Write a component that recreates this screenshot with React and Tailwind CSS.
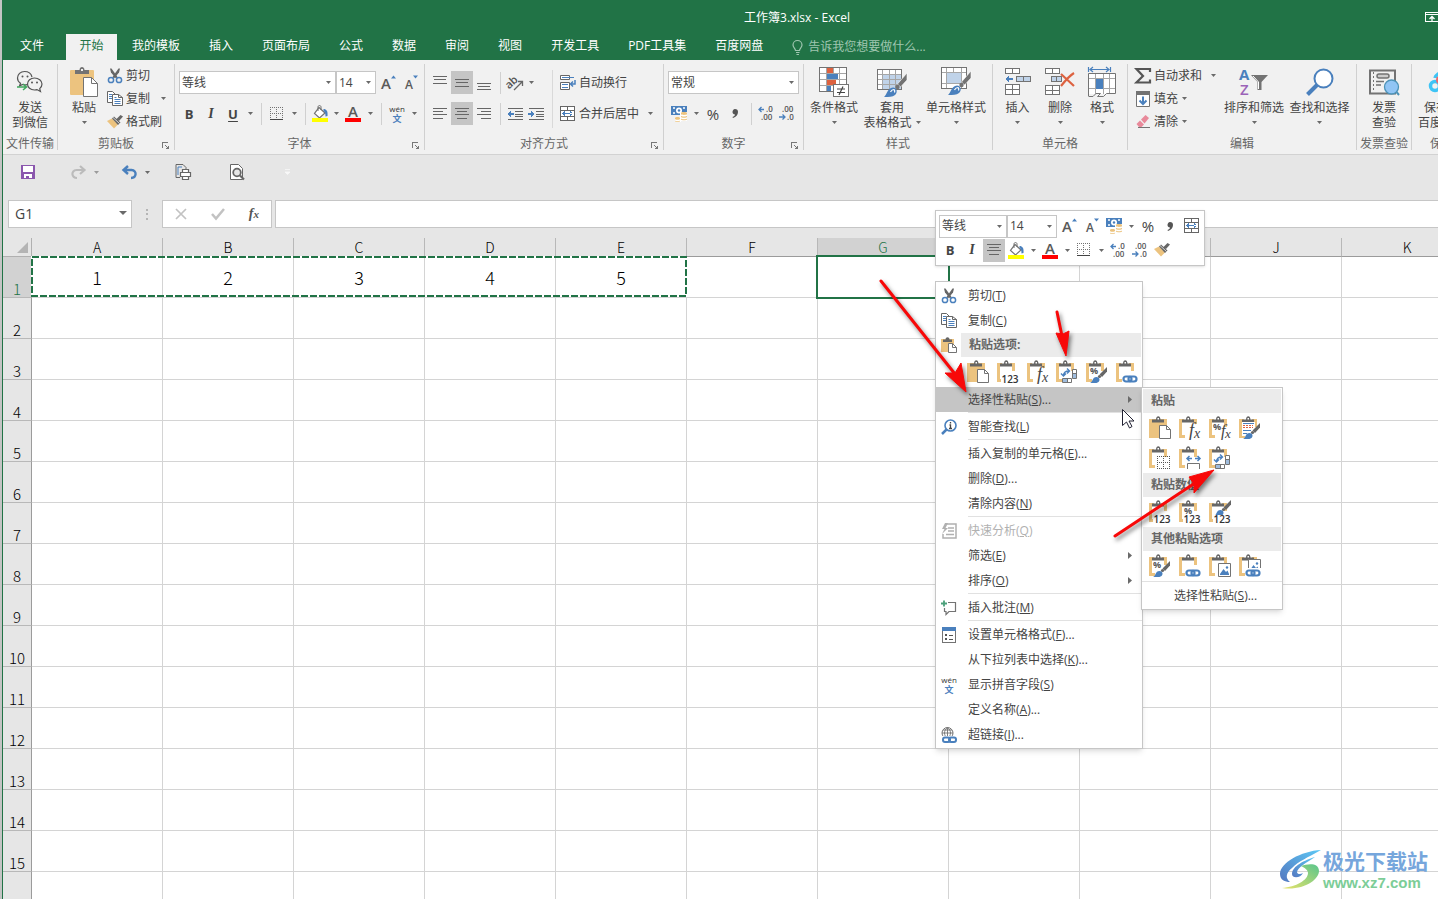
import React, { useState } from 'react';
import clsx from 'clsx';

const GRAY = '#737373';
const BLUE = '#4a80bd';
const TAN = '#ecc37f';

/* ---------- icons ---------- */

function Svg({ w = 16, h = 16, crisp, className, children }) {
  return (
    <svg
      width={w}
      height={h}
      viewBox={`0 0 ${w} ${h}`}
      fill="none"
      shapeRendering={crisp ? 'crispEdges' : undefined}
      className={clsx('shrink-0 overflow-visible', className)}
      aria-hidden="true"
    >
      {children}
    </svg>
  );
}

const Caret = ({ big }) => (
  <Svg w={big ? 8 : 5} h={big ? 4 : 3}>
    <path d={big ? 'M0 0h8L4 4z' : 'M0 0h5L2.5 3z'} fill="#6a6a6a" />
  </Svg>
);

function Scissors() {
  return (
    <Svg>
      <path d="M3 .5l1 4 5 6L10.500 9 4.500.5z" fill="#666" />
      <path d="M13 .5l-1 4-5 6L5.500 9l6-8.500z" fill="#666" />
      <circle cx="4" cy="12" r="2.600" stroke={BLUE} strokeWidth="1.500" />
      <circle cx="12" cy="12" r="2.600" stroke={BLUE} strokeWidth="1.500" />
    </Svg>
  );
}

function Copy() {
  return (
    <Svg>
      <path d="M.5 .5h5l3 3v8h-8z" fill="#fff" stroke="#666" />
      <path d="M2 3.500h3M2 5.500h3M2 7.500h3" stroke={BLUE} />
      <path d="M5.500 3.500h6l4 3v8h-10z" fill="#fff" stroke="#666" />
      <path d="M11.500 3.500v3h4" stroke="#666" />
      <path d="M7.500 6.500h2M7.500 8.500h6M7.500 10.500h6M7.500 12.500h6" stroke={BLUE} />
    </Svg>
  );
}

function FormatPainter() {
  return (
    <Svg>
      <path d="M0 7l5-2.500 6 6L7 14.500z" fill={TAN} />
      <path d="M5 4.500l2-2 6.500 6-2.500 2.500z" fill="#666" />
      <path d="M9 5.500L13.500 1l2.500 1.500L12 7z" fill="#666" />
      <path d="M6 3.500l6.500 6" stroke="#f1f1f1" strokeWidth="0.800" />
    </Svg>
  );
}

function WeChat() {
  return (
    <Svg w={28} h={24}>
      <path d="M16 7c-1-4-4.500-5.500-7.500-5.500C4.500 1.500 1.500 4.500 1.500 8c0 2 1 4 3 5.200L3.500 16l3-1.500c1.500.5 3 .5 4.500.2" stroke="#555" strokeWidth="1.200" />
      <path d="M18.500 8c-4 0-7 2.500-7 6s3 6 7 6c1 0 1.800-.1 2.500-.4l3.500 2-.8-3c1.500-1.200 2.300-2.800 2.300-4.600 0-3.500-3.500-6-7.500-6z" fill="#f1f1f1" stroke="#555" strokeWidth="1.200" />
      <circle cx="6.500" cy="6.500" r="1" fill="#555" />
      <circle cx="11.500" cy="6.500" r="1" fill="#555" />
      <circle cx="16" cy="12.500" r="1" fill="#555" />
      <circle cx="21" cy="12.500" r="1" fill="#555" />
      <path d="M1 17h9M7 14l3.500 3L7 20" stroke="#41a85f" strokeWidth="1.500" />
    </Svg>
  );
}

function PasteLarge() {
  return (
    <Svg w={28} h={30}>
      <rect x="0" y="3" width="24" height="25" rx="1" fill={TAN} />
      <path d="M5 3h4.500c0-4 5-4 5 0H19v4H5z" fill="#737373" />
      <rect x="11" y="2" width="2" height="2" fill="#f1f1f1" />
      <path d="M13.500 10.500h8l6 6v13h-14z" fill="#fff" stroke={GRAY} />
      <path d="M21.500 10.500v6h6" stroke={GRAY} />
    </Svg>
  );
}

function FontSize({ up }) {
  return (
    <Svg>
      <text x={up ? 1 : 2} y="14" fontSize={up ? 15 : 12} fontWeight="600" fill="#5a5a5a">A</text>
      <path d={up ? 'M11 3.500h5L13.500.5z' : 'M10 .5h5l-2.500 3z'} fill={BLUE} />
    </Svg>
  );
}

const Borders = () => (
  <Svg w={14} h={14} crisp>
    <path d="M0 .5h13M0 6.500h13M.5 0v12M6.500 0v12M12.500 0v12" stroke={GRAY} strokeDasharray="1 1" />
    <path d="M0 12.500h13" stroke="#444" />
  </Svg>
);

function FillColor() {
  return (
    <Svg w={16} h={17}>
      <path d="M7 2.500l6 5.500-5.500 5L2.500 8.500z" fill="#fff" stroke={GRAY} strokeWidth="1.200" />
      <path d="M6 6V2c0-2 3-2 3 0v3" stroke={GRAY} />
      <path d="M11.500 4c3 0 4.500 2 4 7l-2 .5c0-3-.5-4.500-2-5.500z" fill={BLUE} />
      <rect x="0" y="13" width="16" height="4" fill="#ffff00" />
    </Svg>
  );
}

function FontColor() {
  return (
    <Svg w={16} h={17}>
      <text x="3" y="12" fontSize="15" fontWeight="600" fill="#5a5a5a">A</text>
      <rect x="0" y="13" width="16" height="4" fill="#ff0000" />
    </Svg>
  );
}

function Pinyin() {
  return (
    <Svg w={16} h={18}>
      <text x="8" y="7" fontSize="8" textAnchor="middle" fill="#333">wén</text>
      <text x="8" y="17" fontSize="9" fontWeight="700" textAnchor="middle" fill={BLUE}>文</text>
    </Svg>
  );
}

const LINES = {
  top: 'M0 1.500h14M1 4.500h12M0 8.500h14',
  middle: 'M0 4.500h14M1 7.500h12M0 11.500h14',
  bottom: 'M0 8.500h14M1 11.500h12M0 14.500h14',
  left: 'M0 2.500h14M0 5.500h10M0 8.500h14M0 12.500h10',
  center: 'M0 2.500h14M2 5.500h10M0 8.500h14M2 12.500h10',
  right: 'M0 2.500h14M4 5.500h10M0 8.500h14M4 12.500h10',
};

const Align = ({ kind }) => (
  <Svg w={14} h={16} crisp>
    <path d={LINES[kind]} stroke="#666" />
  </Svg>
);

const Orientation = () => (
  <Svg>
    <text x="-1" y="11" fontSize="11" fontWeight="600" fill="#555" transform="rotate(-42 5 9)">ab</text>
    <path d="M7 15l8-8M11 6.500h4.500V11" stroke="#666" strokeWidth="1.300" />
  </Svg>
);

const Indent = ({ out }) => (
  <Svg h={14} crisp>
    <path d="M1 1.500h15M8 4.500h8M8 7.500h8M8 9.500h8M1 12.500h15" stroke="#666" />
    <path d={out ? 'M0 7l4-3v2h3v2H4v2z' : 'M7 7L3 4v2H0v2h3v2z'} fill={BLUE} />
  </Svg>
);

const WrapText = () => (
  <Svg>
    <path d="M.5 .5h9v4h-9zM.5 7.500h9v7h-9z" fill="#fff" stroke="#666" />
    <path d="M2 2.500h12M2 9.500h6M2 12.500h6" stroke={BLUE} />
    <path d="M15 5v4h-4M13 6.500L10.500 9l2.500 2.500" stroke={BLUE} strokeWidth="1.500" />
  </Svg>
);

const Merge = () => (
  <Svg crisp>
    <path d="M.5 .5h14v14H.5zM.5 4.500h14M.5 10.500h14M7.500 .5v4M7.500 10.500v4" fill="#fff" stroke="#666" />
    <path d="M2 7h11v1H2zM5 5v5L2 7.500zM10 5v5l3-2.500z" fill={BLUE} />
  </Svg>
);

function Money() {
  return (
    <Svg>
      <rect width="16" height="9" fill={BLUE} />
      <path d="M2 2h2M12 2h2M2 7h2" stroke="#fff" strokeWidth="1.500" />
      <circle cx="8" cy="4.500" r="3" fill="#fff" />
      <circle cx="8" cy="4.500" r="1.200" fill={BLUE} />
      <path d="M9 6h7v9h-6v1H4v-5h5z" fill="#fff" />
      <path d="M10 7c0-1.300 6-1.300 6 0v1c0 1.200-6 1.200-6 0zM10 9.700c0 1 6 1 6 0v1.200c0 1-6 1-6 0zM10 12.500c0 1 6 1 6 0v1c0 1-6 1-6 0zM4 12c0-1.200 5-1.200 5 0v1c0 1-5 1-5 0zM4 14.500c0 1 5 1 5 0v.8c0 1-5 1-5 0z" fill={TAN} />
    </Svg>
  );
}

function Decimal({ more }) {
  return (
    <Svg w={16} h={15}>
      <text x={more ? 8 : 3} y="6" fontSize="8" fontWeight="600" fill="#555">{more ? '.0' : '.00'}</text>
      <text x={more ? 3 : 8} y="14" fontSize="8" fontWeight="600" fill="#555">{more ? '.00' : '.0'}</text>
      <path d={more ? 'M6 3.500H1M3.500 1L1 3.500 3.500 6' : 'M0 11h6M3.500 8.500L6 11l-2.500 2.500'} stroke={BLUE} strokeWidth="1.300" />
    </Svg>
  );
}

const Brush = () => (
  <g>
    <path d="M30 6v7l-6.500 7-3-3z" fill={GRAY} stroke="#fff" strokeWidth="0.600" />
    <circle cx="20.500" cy="20" r="2.200" fill={GRAY} />
    <path d="M7 30c3-2 3-9 9-9.500 4 0 5 5 2 7.500-2.500 2-6 2-11 2z" fill={BLUE} />
    <path d="M13.500 25c1-2 2-2.500 3.500-2.500 1 1 1 2 .5 3" stroke="#fff" strokeWidth="1.200" />
  </g>
);

const CondFormat = () => (
  <Svg w={30} h={30}>
    <g shapeRendering="crispEdges">
      <path d="M.5 .5h27v24H.5z" fill="#fff" />
      <path d="M7.500 0v25M14.500 0v25M20.500 0v25M0 6.500h28M0 12.500h28M0 18.500h28" stroke="#a6a6a6" />
      <path d="M.5 .5h27v24H.5z" stroke={GRAY} />
      <path d="M8 1h6v5H8zM8 13h9v5H8z" fill="#dd6240" />
      <path d="M8 7h11v5H8zM8 19h4v5H8z" fill={BLUE} />
      <path d="M14.500 17.500h15v12h-15z" fill="#fff" stroke={GRAY} />
    </g>
    <path d="M18 22h8M18 25.500h8M24 19.500l-4 8.500" stroke="#444" strokeWidth="1.200" />
  </Svg>
);

const TableFormat = () => (
  <Svg w={30} h={30}>
    <g shapeRendering="crispEdges">
      <path d="M.5 2.500h24v20H.5z" fill="#fff" />
      <path d="M6 8h18v14H6z" fill="#c0d3e9" />
      <path d="M5.500 2v21M12.500 2v21M18.500 2v21M0 7.500h25M0 12.500h25M0 17.500h25" stroke="#a6a6a6" />
      <path d="M.5 2.500h24v20H.5z" stroke={GRAY} />
    </g>
    <Brush />
  </Svg>
);

const CellStyles = () => (
  <Svg w={30} h={30}>
    <g shapeRendering="crispEdges">
      <path d="M.5 .5h25v21H.5z" fill="#fff" />
      <path d="M5.500 0v22M20.500 0v22M0 5.500h26M0 16.500h26M12.500 0v5" stroke="#a6a6a6" />
      <path d="M6 6h14v10H6z" fill="#c0d3e9" />
      <path d="M.5 .5h25v21H.5z" stroke={GRAY} />
    </g>
    <g transform="translate(0 -2)"><Brush /></g>
  </Svg>
);

const InsertCells = () => (
  <Svg w={28} h={28} crisp>
    <path d="M1.500 .5h14v5h-14zM8.500 .5v5M1.500 16.500h14v10h-14zM8.500 16.500v10M1.500 21.500h14" fill="#fff" stroke={GRAY} />
    <path d="M12.500 8.500h14v5h-14zM19.500 8.500v5" fill="#c0d3e9" stroke={GRAY} />
    <path d="M1 11l4-3.500V10h4v2H5v2.500z" fill={BLUE} />
  </Svg>
);

const DeleteCells = () => (
  <Svg w={30} h={28}>
    <g shapeRendering="crispEdges">
      <path d="M.5 .5h14v5H.5zM7.500 .5v5M.5 17.500h14v9H.5zM7.500 17.500v9M.5 22.500h14" fill="#fff" stroke={GRAY} />
      <path d="M6.500 8.500h10v5h-10zM11.500 8.500v5" fill="#c0d3e9" stroke={GRAY} />
    </g>
    <path d="M16 6l13 12M29 5c-5 3-9 8-13 13" stroke="#dd6240" strokeWidth="2.200" />
  </Svg>
);

const FormatCells = () => (
  <Svg w={28} h={32}>
    <path d="M.5 1v5M22.500 1v5M2 3.500h19M5 1L2 3.500 5 6M18 1l3 2.500L18 6" stroke={BLUE} strokeWidth="1.200" />
    <g shapeRendering="crispEdges">
      <path d="M.5 7.500h27v20H.5z" fill="#fff" />
      <path d="M7.500 7v21M15.500 7v21M21.500 7v21M0 12.500h28M0 22.500h28" stroke="#a6a6a6" />
      <path d="M8 13h7v10H8z" fill={BLUE} />
    </g>
    <path d="M.5 30V7.500h27v20h-9l-3 3h-6l3-3H8l-3 3H.5" stroke={GRAY} />
  </Svg>
);

const Sigma = () => (
  <Svg>
    <path d="M15 4V1H1.500L8 8l-6.500 6.500H15v-3" stroke="#555" strokeWidth="2.200" />
  </Svg>
);

const FillDown = () => (
  <Svg>
    <path d="M1.500 .5h13v15h-13z" fill="#fff" stroke={GRAY} />
    <path d="M1 0h14v4H1z" fill={GRAY} />
    <path d="M8 5.500v8M4.500 9.500L8 13l3.500-3.500" stroke={BLUE} strokeWidth="2" />
  </Svg>
);

const Eraser = () => (
  <Svg>
    <path d="M6 5.500L10.500 1 14 4l-4.500 5.500z" fill="#e8899a" />
    <path d="M5 6.500l4 4L6.500 13H4L1.500 10z" fill="#e8899a" />
    <path d="M3 13.500h12" stroke={GRAY} />
  </Svg>
);

const SortFilter = () => (
  <Svg w={30} h={30}>
    <text x="0" y="13" fontSize="15" fontWeight="700" fill={BLUE}>A</text>
    <text x="1" y="28" fontSize="15" fontWeight="600" fill="#9b63b8">Z</text>
    <path d="M12 8h17l-6.500 7v8h-4v-8z" fill={GRAY} />
    <path d="M14 9l5.500 6v7" stroke="#fff" />
  </Svg>
);

const FindBig = () => (
  <Svg w={28} h={28}>
    <path d="M1.500 26.500L11 17" stroke={BLUE} strokeWidth="4" />
    <circle cx="17.500" cy="10.500" r="9" fill="#fff" stroke={BLUE} strokeWidth="2" />
  </Svg>
);

const Invoice = () => (
  <Svg w={30} h={27}>
    <path d="M1 1.500h25v23H1z" fill="#f1f1f1" stroke={GRAY} strokeWidth="2" />
    <path d="M4.500 3v20" stroke={GRAY} strokeDasharray="2 2" />
    <rect x="8" y="5" width="12" height="4" rx="2" fill="#ccc" stroke={GRAY} strokeWidth="1.500" />
    <path d="M7 12.500h8M7 16h5" stroke={GRAY} strokeWidth="1.500" />
    <circle cx="22.500" cy="18" r="7" fill="#91c5f5" stroke="#4d93b8" strokeWidth="1.300" />
    <path d="M27.500 23l2.500 3" stroke="#4d93b8" strokeWidth="2" />
  </Svg>
);

const BaiduPan = () => (
  <Svg w={28} h={26}>
    <circle cx="7" cy="17" r="4.500" stroke="#3fc4f5" strokeWidth="3.500" />
    <circle cx="20" cy="17" r="4.500" stroke="#3f8ff5" strokeWidth="3.500" />
    <path d="M7 9c1-6 12-6 13 0" stroke="#3fc4f5" strokeWidth="3.500" />
    <circle cx="12" cy="11" r="4" fill="#f0686c" />
  </Svg>
);

const Launcher = () => (
  <Svg w={8} h={8} crisp>
    <path d="M.5 6V.5H6M3 3l3 3" stroke="#777" />
    <path d="M7 3v4H3z" fill="#777" />
  </Svg>
);

const Comma = () => (
  <Svg w={6} h={9}>
    <path d="M3 0c2 0 3 1 3 3 0 3-2 5-5 6l-.5-1C2 7.500 3 6.500 3 5.500 1.500 5.500.5 4.500.5 3S1.500 0 3 0z" fill="#555" />
  </Svg>
);

/* Small clipboard drawings used by the paste options */

const paste123 = (
  <g>
    <path d="M4 15h18v9H4z" fill="#fff" />
    <text x="13" y="23" fontSize="10" fontWeight="600" textAnchor="middle" fill="#333">123</text>
  </g>
);
const pastePct = <text x="4" y="14" fontSize="9" fontWeight="700" fill="#555">%</text>;
const pasteFx = (
  <g fill="#444" fontStyle="italic" fontFamily="Liberation Serif, serif">
    <path d="M11 8h10v15H9v-6z" fill="#fff" />
    <text x="10" y="20" fontSize="18">f</text>
    <text x="15" y="22" fontSize="14">x</text>
  </g>
);
const pasteLink = (
  <g>
    <path d="M6 14h16v9H6z" fill="#fff" />
    <rect x="7.500" y="16.500" width="8" height="5" rx="2.500" stroke={BLUE} strokeWidth="2.200" />
    <rect x="12.500" y="16.500" width="8" height="5" rx="2.500" stroke={BLUE} strokeWidth="2.200" />
  </g>
);
const pasteBrush = (
  <g>
    <path d="M21 7v4.500L16 17l-2.500-2.500z" fill="#666" />
    <circle cx="13.500" cy="16.500" r="1.600" fill="#666" />
    <path d="M4 23c3-1 2-6 6.500-6 3 0 4 3 2 5-2 1.500-5 1-8.500 1z" fill={BLUE} />
  </g>
);
const pastePicture = (
  <g>
    <path d="M9.500 9.500h12v13h-12z" fill="#fff" stroke={GRAY} />
    <path d="M11 20l3.500-5 2.500 3 1.500-1.500L20 20v1h-9z" fill={BLUE} />
    <circle cx="18" cy="13.500" r="1.200" fill={BLUE} />
  </g>
);

const PASTE_ART = {
  all: (
    <g>
      <path d="M10.500 9.500h7l4 4v9h-11z" fill="#fff" stroke={GRAY} />
      <path d="M17.500 9.500v4h4" stroke={GRAY} />
    </g>
  ),
  values: paste123,
  formulas: pasteFx,
  transpose: (
    <g>
      <path d="M16.500 9.500h4v9h-4zM6.500 18.500h9v4h-9z" fill="#fff" stroke={GRAY} />
      <path d="M17 14h3v4h-3zM7 19h4v3H7z" fill="#9fbcdd" />
      <path d="M16.500 13.500h4M11.500 18.500v4" stroke={GRAY} />
      <path d="M7.500 16c0-3 1.500-5 5.500-5M5 13.500L7.500 16l2.500-2.500M11 8.500l2.500 2.500-2.500 2.500" stroke={BLUE} strokeWidth="1.400" />
    </g>
  ),
  formatting: <g>{pastePct}{pasteBrush}</g>,
  link: pasteLink,
  formulaNumber: (
    <g>
      {pastePct}
      <g fill="#444" fontStyle="italic" fontFamily="Liberation Serif, serif">
        <text x="12" y="20" fontSize="16">f</text>
        <text x="16" y="22" fontSize="13">x</text>
      </g>
    </g>
  ),
  keepSource: (
    <g>
      <path d="M3 6h13v14H3z" fill="#fff" />
      <path d="M4 9.500h10M4 11.500h10" stroke="#dd6240" strokeDasharray="2 1" />
      <path d="M4 7.500h11M4 14.500h8M4 17.500h4" stroke={BLUE} />
      {pasteBrush}
    </g>
  ),
  noBorders: (
    <path d="M8 10.500h13M8 16.500h13M8 22.500h13M8.500 10v13M14.500 10v13M20.500 10v13" stroke="#555" strokeDasharray="1 1" shapeRendering="crispEdges" />
  ),
  colWidths: (
    <g>
      <path d="M8 12.500h5M16 12.500h5M10.500 10L8 12.500l2.500 2.500M18.500 10l2.500 2.500-2.500 2.500" stroke={BLUE} strokeWidth="1.500" />
      <path d="M8.500 23v-5.500h12V23" stroke={GRAY} />
    </g>
  ),
  valueNumber: (
    <g>
      {paste123}
      <text x="5" y="14" fontSize="9" fontWeight="700" fill="#555">%</text>
    </g>
  ),
  valueSource: (
    <g>
      <g transform="translate(1 -7)">{pasteBrush}</g>
      {paste123}
    </g>
  ),
  picture: pastePicture,
  linkedPicture: (
    <g>
      <g transform="translate(0 -4)">{pastePicture}</g>
      {pasteLink}
    </g>
  ),
};

function PasteIcon({ kind }) {
  return (
    <Svg w={22} h={24}>
      {kind === 'all' ? (
        <path d="M0 3h18v19H0z" fill={TAN} />
      ) : (
        <path d="M0 3h5v3H3v13h3v3H0zM13 3h5v8h-3V6h-2z" fill={TAN} />
      )}
      <path d="M3 3.500h4c0-4.500 4.500-4.500 4.500 0H15v3H3z" fill="#666" />
      <path d="M8.500 2h1.500v1.500H8.500z" fill="#fff" />
      {PASTE_ART[kind]}
    </Svg>
  );
}

const MENU_ICONS = {
  cut: <Scissors />,
  copy: <Copy />,
  paste: (
    <Svg>
      <path d="M0 2h13v13H0z" fill={TAN} />
      <path d="M2 2.500h2.500c0-3 4-3 4 0H11V5H2z" fill="#666" />
      <path d="M7.500 6.500h4l4 4v5h-8z" fill="#fff" stroke={GRAY} />
      <path d="M11.500 6.500v4h4" stroke={GRAY} />
    </Svg>
  ),
  search: (
    <Svg>
      <path d="M1 15l4.500-4.500" stroke={BLUE} strokeWidth="2.500" />
      <circle cx="9.500" cy="6.500" r="5.500" fill="#fff" stroke={BLUE} strokeWidth="1.600" />
      <path d="M9.500 3v1.500M8.500 6h1v3.500M8 9.500h3" stroke="#444" strokeWidth="1.300" />
    </Svg>
  ),
  quick: (
    <Svg>
      <path d="M6 1h9v14H2v-4" stroke="#b0b0b0" strokeWidth="1.500" />
      <path d="M7 5h6M7 8h6M5 11.500h8" stroke="#b0b0b0" strokeWidth="1.500" />
      <path d="M4 0L1 6h2.500L1 11l6-6H4.500L7 0z" fill="#b0b0b0" />
    </Svg>
  ),
  comment: (
    <Svg>
      <path d="M7 2.500h7.500v9H8L5 14.500v-3H3.500V8" stroke={GRAY} strokeWidth="1.200" />
      <path d="M0 3.500h6M3 .5v6" stroke="#4ba07b" strokeWidth="1.800" />
    </Svg>
  ),
  format: (
    <Svg crisp>
      <path d="M1.500 1.500h13v14h-13z" fill="#fff" stroke={GRAY} />
      <path d="M1 0h14v4H1z" fill={BLUE} />
      <path d="M4 7h2v2H4zM4 11h2v2H4zM8 8h4v1H8zM8 12h4v1H8z" fill="#555" />
    </Svg>
  ),
  pinyin: <Pinyin />,
  link: (
    <Svg>
      <circle cx="6.500" cy="6" r="5.500" stroke={GRAY} />
      <path d="M1 6h11M6.500.5v11M2 3h9M6.500.5c-4 3-4 8 0 11M6.500.5c4 3 4 8 0 11" stroke={GRAY} strokeWidth="0.900" />
      <path d="M1 9h15v7H1z" fill="#fff" />
      <rect x="2" y="10.500" width="7" height="4.500" rx="2" stroke={BLUE} strokeWidth="2" />
      <rect x="8" y="10.500" width="7" height="4.500" rx="2" stroke={BLUE} strokeWidth="2" />
    </Svg>
  ),
};

/* ---------- ribbon pieces ---------- */

function Group({ label, launcher, className, children }) {
  return (
    <section className={clsx('flex shrink-0 flex-col border-r border-[#d0d0d0]', className)}>
      <div className="flex h-[74px]">{children}</div>
      <div className="flex h-3 items-center">
        <span className="flex-1 whitespace-nowrap text-center leading-3 text-[#666]">{label}</span>
        {launcher && (
          <button className="-ml-3 mr-1 w-2 self-end" aria-label={label}>
            <Launcher />
          </button>
        )}
      </div>
    </section>
  );
}

function BigButton({ icon, lines, sideCaret, className }) {
  return (
    <button className={clsx('flex shrink-0 flex-col items-center self-start whitespace-nowrap leading-[15px]', className)}>
      <span className="flex h-9 items-center justify-center">{icon}</span>
      <span>{lines[0]}</span>
      <span className="flex h-[15px] items-center gap-1">
        {lines[1]}
        {(sideCaret || !lines[1]) && <Caret />}
      </span>
    </button>
  );
}

function RowButton({ icon, text, caret, className }) {
  return (
    <button className={clsx('flex h-[23px] items-center gap-[3px] whitespace-nowrap', className)}>
      <span className="flex w-4 justify-center">{icon}</span>
      <span className="leading-4">{text}</span>
      {caret && <span className={caret}><Caret /></span>}
    </button>
  );
}

function Tool({ label, active, className, children }) {
  return (
    <button
      aria-label={label}
      className={clsx(
        'flex h-[23px] shrink-0 items-center justify-center text-[13px] leading-4',
        active && 'bg-[#c5c5c5]',
        className || 'w-[22px]'
      )}
    >
      {children}
    </button>
  );
}

const DropTool = ({ label }) => (
  <button aria-label={label} className="flex h-[23px] w-3 shrink-0 items-center justify-center">
    <Caret />
  </button>
);

const Sep = () => (
  <span className="flex w-[10px] shrink-0 justify-center">
    <span className="h-[22px] w-px bg-[#d0d0d0]" />
  </span>
);

function Combo({ label, value, className }) {
  return (
    <span className={clsx('relative flex h-[23px] shrink-0', className)}>
      <select
        aria-label={label}
        className="w-full appearance-none border border-[#c6c6c6] bg-white pl-[2px] text-xs leading-4 text-[#444]"
      >
        <option>{value}</option>
      </select>
      <span className="pointer-events-none absolute right-[5px] top-[10px]">
        <Caret />
      </span>
    </span>
  );
}

const Bold = () => <b className="text-[#444]">B</b>;
const Italic = () => <i className="font-['Liberation_Serif'] text-sm font-bold leading-4 text-[#444]">I</i>;
const Percent = () => <span className="text-[15px] leading-[14px]">%</span>;

function Ribbon() {
  return (
    <div className="flex h-[95px] shrink-0 overflow-hidden border-b border-[#d2d2d2] bg-[#f1f1f1] py-1">
      <Group label="文件传输" className="w-[55px]">
        <BigButton icon={<WeChat />} lines={['发送', '到微信']} className="w-full" />
      </Group>

      <Group label="剪贴板" launcher className="w-[117px]">
        <BigButton icon={<PasteLarge />} lines={['粘贴']} className="w-[49px] pl-[3px]" />
        <div>
          <RowButton icon={<Scissors />} text="剪切" />
          <RowButton icon={<Copy />} text="复制" caret="ml-2" />
          <RowButton icon={<FormatPainter />} text="格式刷" />
        </div>
      </Group>

      <Group label="字体" launcher className="w-[250px]">
        <div className="flex flex-col gap-2 pl-[3px] pt-[7px]">
          <div className="flex pl-px">
            <Combo label="字体" value="等线" className="w-[157px]" />
            <Combo label="字号" value="14" className="w-10" />
            <Tool label="增大字号" className="w-6"><FontSize up /></Tool>
            <Tool label="减小字号"><FontSize /></Tool>
          </div>
          <div className="flex items-center">
            <Tool label="加粗"><Bold /></Tool>
            <Tool label="倾斜"><Italic /></Tool>
            <Tool label="下划线"><span className="font-bold underline underline-offset-2">U</span></Tool>
            <DropTool label="下划线选项" />
            <Sep />
            <Tool label="边框"><Borders /></Tool>
            <DropTool label="边框选项" />
            <Sep />
            <Tool label="填充颜色" className="w-5"><FillColor /></Tool>
            <DropTool label="填充颜色选项" />
            <Tool label="字体颜色"><FontColor /></Tool>
            <DropTool label="字体颜色选项" />
            <Sep />
            <Tool label="拼音"><Pinyin /></Tool>
            <DropTool label="拼音选项" />
          </div>
        </div>
      </Group>

      <Group label="对齐方式" launcher className="w-[239px]">
        <div className="flex w-[124px] flex-col gap-2 pl-1 pt-[7px]">
          <div className="flex items-center">
            <Tool label="顶端对齐"><Align kind="top" /></Tool>
            <Tool label="垂直居中" active><Align kind="middle" /></Tool>
            <Tool label="底端对齐"><Align kind="bottom" /></Tool>
            <Sep />
            <Tool label="方向" className="w-5"><Orientation /></Tool>
            <DropTool label="方向选项" />
          </div>
          <div className="flex items-center">
            <Tool label="左对齐"><Align kind="left" /></Tool>
            <Tool label="居中" active><Align kind="center" /></Tool>
            <Tool label="右对齐"><Align kind="right" /></Tool>
            <Sep />
            <Tool label="减少缩进量" className="w-5"><Indent out /></Tool>
            <Tool label="增加缩进量"><Indent /></Tool>
          </div>
        </div>
        <div className="mb-[10px] ml-[3px] mt-[6px] flex flex-col gap-2 border-l border-[#d9d9d9] pl-[7px] pt-px">
          <RowButton icon={<WrapText />} text="自动换行" />
          <RowButton icon={<Merge />} text="合并后居中" caret="ml-[6px]" />
        </div>
      </Group>

      <Group label="数字" launcher className="w-[140px]">
        <div className="flex flex-col gap-2 pl-1 pt-[7px]">
          <Combo label="数字格式" value="常规" className="w-[131px]" />
          <div className="flex items-center">
            <Tool label="会计数字格式"><Money /></Tool>
            <DropTool label="会计数字格式选项" />
            <Tool label="百分比样式"><Percent /></Tool>
            <Tool label="千位分隔样式"><Comma /></Tool>
            <Sep />
            <Tool label="增加小数位数" className="w-5"><Decimal more /></Tool>
            <Tool label="减少小数位数"><Decimal /></Tool>
          </div>
        </div>
      </Group>

      <Group label="样式" className="w-[189px]">
        <BigButton icon={<CondFormat />} lines={['条件格式']} className="w-[60px]" />
        <BigButton icon={<TableFormat />} lines={['套用', '表格格式']} sideCaret className="w-[56px]" />
        <BigButton icon={<CellStyles />} lines={['单元格样式']} className="w-[72px]" />
      </Group>

      <Group label="单元格" className="w-[135px]">
        <BigButton icon={<InsertCells />} lines={['插入']} className="ml-[3px] w-[43px]" />
        <BigButton icon={<DeleteCells />} lines={['删除']} className="w-[42px]" />
        <BigButton icon={<FormatCells />} lines={['格式']} className="w-[42px]" />
      </Group>

      <Group label="编辑" className="w-[229px]">
        <div className="w-[93px] shrink-0 pl-[7px]">
          <RowButton icon={<Sigma />} text="自动求和" caret="ml-[6px]" />
          <RowButton icon={<FillDown />} text="填充" caret="ml-px" />
          <RowButton icon={<Eraser />} text="清除" caret="ml-px" />
        </div>
        <BigButton icon={<SortFilter />} lines={['排序和筛选']} className="w-[66px]" />
        <BigButton icon={<FindBig />} lines={['查找和选择']} className="w-[65px]" />
      </Group>

      <Group label="发票查验" className="w-[55px]">
        <BigButton icon={<Invoice />} lines={['发票', '查验']} className="w-full" />
      </Group>

      <Group label="保存" className="w-[61px]">
        <BigButton icon={<BaiduPan />} lines={['保存到', '百度网盘']} className="w-full" />
      </Group>
    </div>
  );
}

/* ---------- title, quick access, formula bar ---------- */

const TABS = ['我的模板', '插入', '页面布局', '公式', '数据', '审阅', '视图', '开发工具', 'PDF工具集', '百度网盘'];

function TitleBar() {
  return (
    <header className="flex h-[60px] shrink-0 flex-col overflow-hidden bg-[#217346] text-white">
      <div className="flex h-[34px] items-center pt-px">
        <h1 className="flex-1 pl-[166px] text-center">工作簿3.xlsx - Excel</h1>
        <button aria-label="功能区显示选项" className="w-[13px]">
          <Svg w={16} h={11}>
            <path d="M.5 .5h15v9H.5zM.5 2.500h15" stroke="#fff" shapeRendering="crispEdges" />
            <path d="M7 9V5M4.500 7L7 4.500 9.500 7" stroke="#fff" strokeWidth="1.300" />
          </Svg>
        </button>
      </div>
      <nav className="flex h-[26px] items-center gap-px whitespace-nowrap pl-[3px]">
        <button className="mr-[7px] h-full px-[14px] pb-[2px]">文件</button>
        <button className="h-full w-[51px] bg-[#f1f1f1] pb-[2px] text-[#217346]">开始</button>
        {TABS.map((tab) => (
          <button key={tab} className="h-full px-[14px] pb-[2px]">{tab}</button>
        ))}
        <label className="flex h-full flex-1 items-center gap-1 pl-[14px] text-[#9fc6b0]">
          <Svg w={12} h={15}>
            <path d="M3.500 10.500c0-2-2.500-3-2.500-5.500a4.500 4.500 0 019 0c0 2.500-2.500 3.500-2.500 5.500zM4 12.500h3.500M4.500 14.500h2.500" stroke="#9fc6b0" strokeWidth="1.200" />
          </Svg>
          <input
            aria-label="操作说明搜索"
            placeholder="告诉我您想要做什么..."
            className="w-[150px] bg-transparent placeholder:text-[#9fc6b0]"
          />
        </label>
      </nav>
    </header>
  );
}

function QuickAccess() {
  return (
    <div className="flex h-[34px] shrink-0 items-center pl-[18px]">
      <button aria-label="保存" className="mr-9">
        <Svg w={14} h={14}>
          <path d="M0 0h14v14H0z" fill="#8b57ae" />
          <path d="M2 1h10v6H2zM3 9h8v4H3z" fill="#fff" />
          <path d="M5 11h3v2H5z" fill="#8b57ae" />
        </Svg>
      </button>
      <button aria-label="恢复" className="flex items-center gap-2 opacity-60">
        <Svg w={15} h={14}>
          <path d="M13 5H5.500C-.5 5.500.5 13 6 13M9 1l4.500 4L9 9" stroke="#a0a0a0" strokeWidth="2.200" />
        </Svg>
        <Caret />
      </button>
      <button aria-label="撤消" className="ml-[23px] flex items-center gap-2">
        <Svg w={15} h={14}>
          <path d="M2 5h7.500c6 .5 5 8-.5 8M6 1L1.500 5 6 9" stroke={BLUE} strokeWidth="2.400" />
        </Svg>
        <Caret />
      </button>
      <button aria-label="快速打印" className="ml-[25px]">
        <Svg w={17} h={16}>
          <path d="M1 13.500V.5h7l3 3V6M1 13.500h4" stroke="#666" />
          <path d="M3 11V3h4" stroke={BLUE} />
          <path d="M7.500 8.500v-3h6v3M5.500 8.500h10v4h-10zM7.500 12v3.500h6V12" fill="#fff" stroke="#666" strokeWidth="1.200" />
        </Svg>
      </button>
      <button aria-label="打印预览" className="ml-[38px]">
        <Svg w={16} h={16}>
          <path d="M.5 .5h8l4 4v11H.5z" fill="#fff" stroke="#666" />
          <circle cx="7" cy="8.500" r="3.800" fill="#e6e6e6" stroke="#666" strokeWidth="1.800" />
          <path d="M10 11.500l4 4" stroke="#666" strokeWidth="2.200" />
        </Svg>
      </button>
      <button aria-label="自定义快速访问工具栏" className="ml-[39px]">
        <Svg w={5} h={6}>
          <path d="M0 .5h5M0 3h5L2.500 5.500z" stroke="#f8f8f8" strokeWidth="0.800" fill="#f8f8f8" />
        </Svg>
      </button>
    </div>
  );
}

function FormulaBar() {
  return (
    <div className="mb-[10px] mt-[11px] flex h-7 shrink-0 items-stretch pl-[5px]">
      <label className="relative flex w-[124px]">
        <input aria-label="名称框" defaultValue="G1" className="w-full border border-[#c6c6c6] bg-white pl-[6px] text-sm" />
        <span className="pointer-events-none absolute right-[5px] top-[11px]"><Caret big /></span>
      </label>
      <span className="flex w-[30px] items-center justify-center">
        <Svg w={2} h={11} crisp>
          <path d="M0 0h2v2H0zM0 4h2v2H0zM0 9h2v2H0z" fill="#b5b5b5" />
        </Svg>
      </span>
      <div className="mr-[3px] flex w-[110px] items-center justify-around border border-[#c6c6c6] bg-white">
        <button aria-label="取消">
          <Svg w={12} h={12}><path d="M1 1l10 10M11 1L1 11" stroke="#c2c2c2" strokeWidth="1.700" /></Svg>
        </button>
        <button aria-label="输入">
          <Svg w={14} h={12}><path d="M1 6l4 4.500L13 1" stroke="#c2c2c2" strokeWidth="2.500" /></Svg>
        </button>
        <button aria-label="插入函数" className="font-['Liberation_Serif'] text-sm font-bold italic text-[#555]">
          f<span className="text-[11px]">x</span>
        </button>
      </div>
      <input aria-label="编辑栏" className="min-w-0 flex-1 border-y border-l border-[#c6c6c6] bg-white px-2" />
    </div>
  );
}

/* ---------- sheet ---------- */

const COLUMNS = 'ABCDEFGHIJK'.split('');
const ROWS = Array.from({ length: 16 }, (_, i) => i + 1);
const VALUES = { A1: 1, B1: 2, C1: 3, D1: 4, E1: 5 };

function Sheet({ active }) {
  return (
    <div className="min-h-0 flex-1 overflow-hidden font-['Noto_Sans_CJK_SC',sans-serif] text-black">
      <table className="w-[1470px] table-fixed border-separate border-spacing-0 bg-white">
        <thead>
          <tr className="h-[19px] bg-[#e6e6e6] text-[14px] leading-[18px]">
            <th aria-label="全选" className="w-[29px] border-b border-r border-[#b0b0b0] p-0">
              <span className="flex justify-end pr-[3px]">
                <Svg w={11} h={11}><path d="M11 0v11H0z" fill="#b4b4b4" /></Svg>
              </span>
            </th>
            {COLUMNS.map((col) => (
              <th
                key={col}
                className={clsx(
                  'w-[131px] border-b border-r border-b-[#9b9b9b] border-r-[#b8b8b8] p-0 font-light',
                  col === active && 'bg-[#d2d2d2] text-[#217346]'
                )}
              >
                {col}
              </th>
            ))}
          </tr>
        </thead>
        <tbody>
          {ROWS.map((row) => (
            <tr key={row} className="h-[41px]">
              <th
                className={clsx(
                  'border-b border-r border-b-[#b8b8b8] border-r-[#9b9b9b] p-0 pb-px align-bottom text-[15px] font-light leading-[15px]',
                  row === 1 ? 'bg-[#d2d2d2] text-[#217346]' : 'bg-[#e6e6e6]'
                )}
              >
                {row}
              </th>
              {COLUMNS.map((col) => (
                <td
                  key={col}
                  className="relative border-b border-r border-[#d4d4d4] p-0 text-center text-lg font-light leading-6"
                >
                  {VALUES[col + row]}
                  {col + row === 'A1' && (
                    <svg width="657" height="42" fill="none" className="pointer-events-none absolute -left-px -top-px z-10 max-w-none" aria-hidden="true">
                      <path d="M1 1h654v39H1z" stroke="#fff" strokeWidth="2" />
                      <path d="M1 1h654v39H1z" stroke="#217346" strokeWidth="2" strokeDasharray="7 2" />
                    </svg>
                  )}
                  {col === active && row === 1 && (
                    <span className="absolute -inset-[2px] z-10 border-2 border-[#217346]" />
                  )}
                </td>
              ))}
            </tr>
          ))}
        </tbody>
      </table>
    </div>
  );
}

/* ---------- floating toolbar and menus ---------- */

function MiniToolbar() {
  return (
    <div className="absolute left-[935px] top-[210px] z-20 w-[270px] border border-[#c6c6c6] bg-white py-[3px] pl-[3px] shadow">
      <div className="flex h-6 items-center">
        <Combo label="浮动字体" value="等线" className="w-[68px]" />
        <Combo label="浮动字号" value="14" className="w-[50px]" />
        <Tool label="增大字号" className="w-6"><FontSize up /></Tool>
        <Tool label="减小字号"><FontSize /></Tool>
        <Tool label="会计数字格式"><Money /></Tool>
        <DropTool label="会计数字格式选项" />
        <Tool label="百分比样式"><Percent /></Tool>
        <Tool label="千位分隔样式"><Comma /></Tool>
        <Tool label="合并后居中"><Merge /></Tool>
      </div>
      <div className="flex h-6 items-center">
        <Tool label="加粗"><Bold /></Tool>
        <Tool label="倾斜"><Italic /></Tool>
        <Tool label="居中" active><Align kind="center" /></Tool>
        <Tool label="填充颜色"><FillColor /></Tool>
        <DropTool label="填充颜色选项" />
        <Tool label="字体颜色"><FontColor /></Tool>
        <DropTool label="字体颜色选项" />
        <Tool label="边框"><Borders /></Tool>
        <DropTool label="边框选项" />
        <Tool label="增加小数位数"><Decimal more /></Tool>
        <Tool label="减少小数位数"><Decimal /></Tool>
        <Tool label="格式刷"><FormatPainter /></Tool>
      </div>
    </div>
  );
}

const MENU = [
  { text: '剪切', k: 'T', icon: 'cut' },
  { text: '复制', k: 'C', icon: 'copy' },
  { header: '粘贴选项:', icon: 'paste' },
  { paste: ['all', 'values', 'formulas', 'transpose', 'formatting', 'link'] },
  { text: '选择性粘贴', k: 'S', dots: true, arrow: true, active: true },
  { sep: true },
  { text: '智能查找', k: 'L', icon: 'search' },
  { sep: true },
  { text: '插入复制的单元格', k: 'E', dots: true },
  { text: '删除', k: 'D', dots: true },
  { text: '清除内容', k: 'N' },
  { sep: true },
  { text: '快速分析', k: 'Q', icon: 'quick', disabled: true },
  { text: '筛选', k: 'E', arrow: true },
  { text: '排序', k: 'O', arrow: true },
  { sep: true },
  { text: '插入批注', k: 'M', icon: 'comment' },
  { sep: true },
  { text: '设置单元格格式', k: 'F', icon: 'format', dots: true },
  { text: '从下拉列表中选择', k: 'K', dots: true },
  { text: '显示拼音字段', k: 'S', icon: 'pinyin' },
  { text: '定义名称', k: 'A', dots: true },
  { text: '超链接', k: 'I', icon: 'link', dots: true },
];

function PasteRow({ kinds, className }) {
  return (
    <div className={clsx('flex h-[30px] items-center', className)}>
      {kinds.map((kind) => (
        <button key={kind} aria-label={kind} className="flex w-[30px] justify-center">
          <PasteIcon kind={kind} />
        </button>
      ))}
    </div>
  );
}

function MenuEntry({ item }) {
  if (item.sep) {
    return <div className="ml-8 h-[2px] border-t border-[#e1e1e1]" />;
  }
  if (item.paste) {
    return <PasteRow kinds={item.paste} className="pl-[27px]" />;
  }
  if (item.header) {
    return (
      <div className="flex h-6 items-center pr-px">
        <span className="flex w-[25px] justify-center">{MENU_ICONS[item.icon]}</span>
        <span className="flex h-full flex-1 items-center bg-[#ebebeb] pl-2 font-bold text-[#666]">{item.header}</span>
      </div>
    );
  }
  return (
    <button
      role="menuitem"
      disabled={item.disabled}
      className={clsx(
        'flex h-[25px] w-full items-center whitespace-nowrap text-left',
        item.active && 'bg-[#c5c5c5]',
        item.disabled && 'text-[#b1b1b1]'
      )}
    >
      <span className="mr-[6px] flex w-[26px] shrink-0 justify-center">{MENU_ICONS[item.icon]}</span>
      <span className="flex-1">
        {item.text}(<u>{item.k}</u>){item.dots && '...'}
      </span>
      {item.arrow && (
        <Svg w={4} h={7} className="mr-[10px]"><path d="M0 0l4 3.500L0 7z" fill="#6a6a6a" /></Svg>
      )}
    </button>
  );
}

function ContextMenu() {
  return (
    <div role="menu" className="absolute left-[935px] top-[281px] z-20 w-[208px] border border-[#c6c6c6] bg-white py-px shadow-md">
      {MENU.map((item, i) => (
        <MenuEntry key={i} item={item} />
      ))}
    </div>
  );
}

const SubHeader = ({ children }) => (
  <div className="mx-px flex h-6 items-center bg-[#ebebeb] pl-2 font-bold text-[#666]">{children}</div>
);

function PasteMenu() {
  return (
    <div role="menu" className="absolute left-[1141px] top-[387px] z-30 w-[142px] border border-[#c6c6c6] bg-white pt-px shadow-md">
      <SubHeader>粘贴</SubHeader>
      <PasteRow kinds={['all', 'formulas', 'formulaNumber', 'keepSource']} className="pl-[3px]" />
      <PasteRow kinds={['noBorders', 'colWidths', 'transpose']} className="pl-[3px]" />
      <SubHeader>粘贴数值</SubHeader>
      <PasteRow kinds={['values', 'valueNumber', 'valueSource']} className="pl-[3px]" />
      <SubHeader>其他粘贴选项</SubHeader>
      <PasteRow kinds={['formatting', 'link', 'picture', 'linkedPicture']} className="pl-[3px]" />
      <button role="menuitem" className="flex h-7 w-full items-center border-t border-[#e1e1e1] pl-8 text-left">
        <span>选择性粘贴(<u>S</u>)...</span>
      </button>
    </div>
  );
}

function Annotations() {
  return (
    <svg width="1438" height="899" className="pointer-events-none absolute left-0 top-0 z-40 max-w-none" aria-hidden="true">
      <g fill="#f80808" stroke="#f80808" strokeLinejoin="round" className="drop-shadow-[2px_3px_2px_rgba(0,0,0,0.5)]">
        <path d="M881 281l74 93" strokeWidth="3" strokeLinecap="round" />
        <path d="M945 373l10 0 6-10 5 29z" />
        <path d="M1057 312l5 24" strokeWidth="3" strokeLinecap="round" />
        <path d="M1056 333l7 1 6-3-3 25z" />
        <path d="M1115 536l80-53" strokeWidth="3" strokeLinecap="round" />
        <path d="M1189 477l5 7 0 9 20-23z" />
      </g>
      <path d="M1122.500 409.500v16l4-3.500 3 6 2.500-1.500-3-5.500h5z" fill="#fff" stroke="#223" />
    </svg>
  );
}

function Watermark() {
  return (
    <a href="#xz7" className="absolute bottom-[6px] right-[10px] z-10 flex items-center gap-[2px]">
      <Svg w={42} h={42}>
        <defs>
          <linearGradient id="swirl" x1="0" y1="1" x2="1" y2="0">
            <stop offset="0" stopColor="#5578c0" />
            <stop offset="1" stopColor="#5cc8f5" />
          </linearGradient>
          <linearGradient id="leaf" x1="0" y1="1" x2="1" y2="0">
            <stop offset="0" stopColor="#e9e36a" />
            <stop offset="1" stopColor="#59c58c" />
          </linearGradient>
        </defs>
        <path d="M42 1C22 2 1 14 1 25c0 6 5 8 10 8-5-4-4-9 2-14C20 12 28 9 42 1z" fill="url(#swirl)" />
        <path d="M36 8c-10 3-23 9-23 17 0 5 9 4 11-1-3 2-6 1-6-1 1-5 9-9 18-15z" fill="url(#swirl)" />
        <path d="M22 17c8-3 18-3 18 5 0 9-16 20-37 17 14-1 26-8 26-15 0-3-3-5-7-7z" fill="url(#leaf)" />
      </Svg>
      <span className="flex flex-col font-['Noto_Sans_CJK_SC',sans-serif]">
        <span className="text-[21px] font-bold leading-[26px] text-[#76a6dc]">极光下载站</span>
        <span className="font-['Liberation_Sans'] text-[15px] font-bold leading-5 text-[#7ccd97]">www.xz7.com</span>
      </span>
    </a>
  );
}

export default function App() {
  const [active] = useState('G');

  return (
    <div className="relative h-screen overflow-hidden border-l-2 border-[#c4c4c4] bg-[#e6e6e6] font-['Open_Sans','Noto_Sans_CJK_SC',sans-serif] text-xs text-[#444]">
      <div className="flex h-full flex-col border-l border-[#217346]">
        <TitleBar />
        <Ribbon />
        <QuickAccess />
        <FormulaBar />
        <Sheet active={active} />
      </div>
      <div className="absolute -left-[2px] top-0">
        <MiniToolbar />
        <ContextMenu />
        <PasteMenu />
        <Annotations />
      </div>
      <Watermark />
    </div>
  );
}
